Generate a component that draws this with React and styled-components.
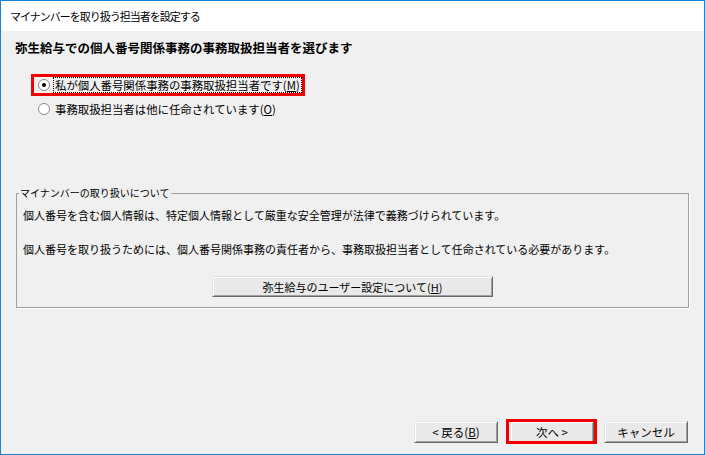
import React from "react";
import styled, { createGlobalStyle } from "styled-components";

const GlobalStyle = createGlobalStyle`
  html, body {
    margin: 0;
    padding: 0;
    background: #fff;
  }
  body {
    font-family: "Noto Sans CJK JP", "Noto Sans", sans-serif;
    color: #000;
  }
`;

const Window = styled.div`
  width: 705px;
  height: 455px;
  box-sizing: border-box;
  border: 1px solid #1883d7;
  display: flex;
  flex-direction: column;
`;

const TitleBar = styled.div`
  flex: none;
  height: 30px;
  background: #fff;
  display: flex;
  align-items: center;
  padding-left: 9px;
  font-size: 11px;
  letter-spacing: -1px;
`;

const Body = styled.div`
  flex: 1;
  background: #f0f0f0;
  padding: 9px 15px 11px 15px;
  display: flex;
  flex-direction: column;
`;

const Heading = styled.div`
  font-size: 12.5px;
  font-weight: bold;
  line-height: 16px;
  margin-left: -1px;
`;

const RadioList = styled.div`
  margin-top: 21px;
  padding-left: 18px;
  display: flex;
  flex-direction: column;
  align-items: flex-start;
  gap: 8px;
`;

const RadioRow = styled.label`
  position: relative;
  display: inline-flex;
  align-items: center;
  height: 16px;
  padding-left: 4px;
  gap: 1px;
  font-size: 11.4px;
`;

const RadioCircle = styled.span`
  width: 12px;
  height: 12px;
  box-sizing: border-box;
  border-radius: 50%;
  border: 1px solid #8a8a8a;
  background: #fff;
  display: flex;
  align-items: center;
  justify-content: center;
  margin-right: 2px;
  &::after {
    content: "";
    width: 4px;
    height: 4px;
    border-radius: 50%;
    background: ${(p) => (p.$checked ? "#000" : "transparent")};
  }
`;

const RadioText = styled.span`
  line-height: 14px;
  padding: 0 1px;
  border: 1px dotted ${(p) => (p.$focused ? "#000" : "transparent")};
`;

const Highlight = styled.span`
  position: absolute;
  inset: ${(p) => p.$inset || "-3px"};
  border: 3px solid #f20000;
  pointer-events: none;
`;

const GroupBox = styled.fieldset`
  margin: 69px 0 0;
  padding: 0 6px 10px;
  min-width: 0;
  border: 1px solid #a0a0a0;
  box-shadow: 1px 1px 0 #fff;
`;

const GroupLegend = styled.legend`
  font-size: 10px;
  line-height: 14px;
  padding: 0 1px;
  margin-left: -4px;
`;

const GroupText = styled.p`
  margin: ${(p) => p.$gap || "7px"} 0 0;
  font-size: 11px;
  line-height: 16px;
`;

const CenterRow = styled.div`
  display: flex;
  justify-content: center;
  margin-top: 19px;
`;

const Button = styled.button`
  width: ${(p) => p.$width || "84px"};
  height: ${(p) => p.$height || "22px"};
  box-sizing: border-box;
  padding: 0;
  font-family: inherit;
  font-size: ${(p) => p.$size || "11.5px"};
  color: #000;
  background: #e9e9e9;
  border: 1px solid;
  border-color: #e3e3e3 #696969 #696969 #e3e3e3;
  box-shadow: inset 1px 1px #fff, inset -1px -1px #a0a0a0;
  display: flex;
  align-items: center;
  justify-content: center;
`;

const Footer = styled.div`
  margin-top: auto;
  display: flex;
  justify-content: flex-end;
  align-items: center;
  padding-right: 1px;
`;

const Marked = styled.div`
  position: relative;
  margin: ${(p) => p.$margin || "0"};
`;

export default function App() {
  return (
    <>
      <GlobalStyle />
      <Window>
        <TitleBar>マイナンバーを取り扱う担当者を設定する</TitleBar>
        <Body>
          <Heading>弥生給与での個人番号関係事務の事務取扱担当者を選びます</Heading>
          <RadioList>
            <RadioRow>
              <RadioCircle $checked />
              <RadioText $focused>
                私が個人番号関係事務の事務取扱担当者です(<u>M</u>)
              </RadioText>
              <Highlight />
            </RadioRow>
            <RadioRow>
              <RadioCircle />
              <RadioText>
                事務取扱担当者は他に任命されています(<u>O</u>)
              </RadioText>
            </RadioRow>
          </RadioList>
          <GroupBox>
            <GroupLegend>マイナンバーの取り扱いについて</GroupLegend>
            <GroupText>
              個人番号を含む個人情報は、特定個人情報として厳重な安全管理が法律で義務づけられています。
            </GroupText>
            <GroupText $gap="18px">
              個人番号を取り扱うためには、個人番号関係事務の責任者から、事務取扱担当者として任命されている必要があります。
            </GroupText>
            <CenterRow>
              <Button $width="281px" $height="21px" $size="11px">
                弥生給与のユーザー設定について(<u>H</u>)
              </Button>
            </CenterRow>
          </GroupBox>
          <Footer>
            <Button>
              &lt; 戻る(<u>B</u>)
            </Button>
            <Marked $margin="0 10px 0 12px">
              <Button>次へ &gt;</Button>
              <Highlight $inset="-2px -3px -1px -4px" />
            </Marked>
            <Button>キャンセル</Button>
          </Footer>
        </Body>
      </Window>
    </>
  );
}
